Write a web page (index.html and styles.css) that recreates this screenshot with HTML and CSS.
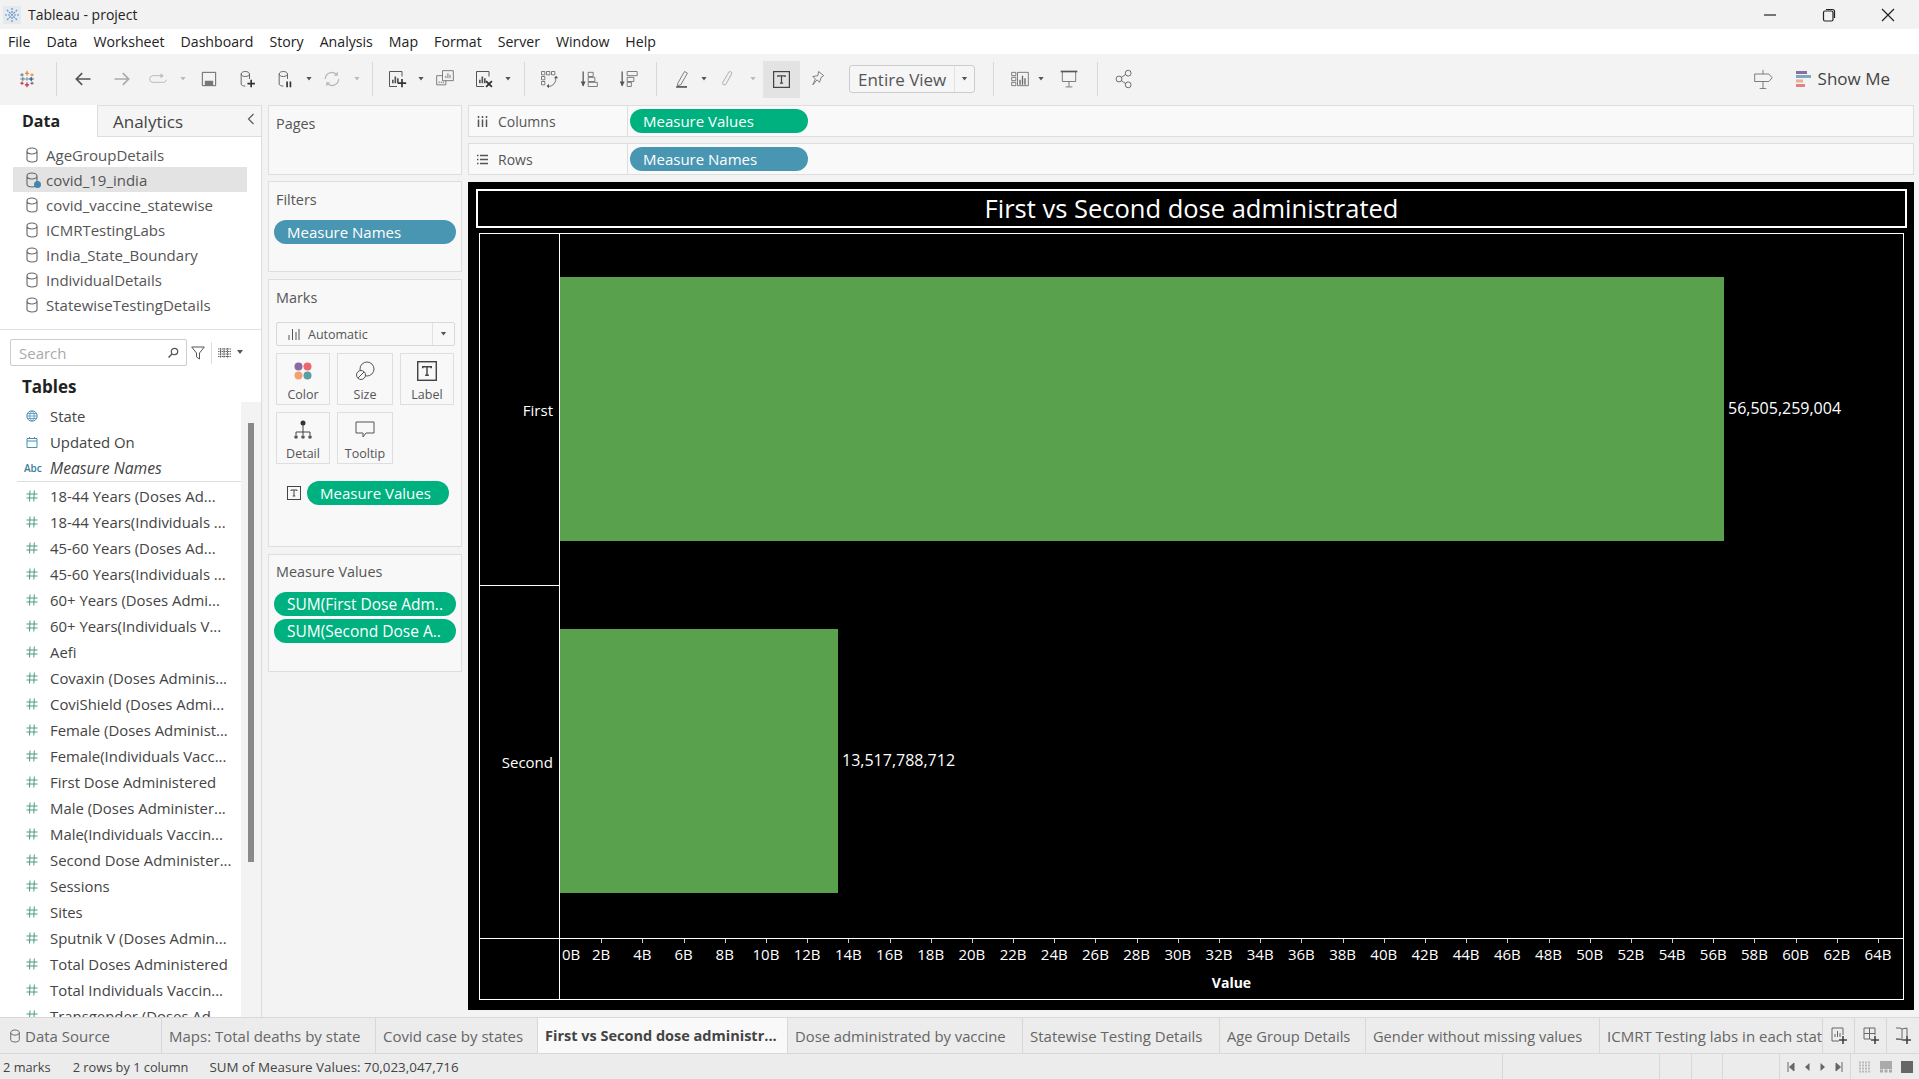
FILE: index.html
```html
<!DOCTYPE html>
<html lang="en">
<head>
<meta charset="utf-8">
<title>Tableau - project</title>
<link rel="stylesheet" href="styles.css">
</head>
<body>
<svg class="defs" width="0" height="0" aria-hidden="true">
  <symbol id="cyl" viewBox="0 0 14 16"><path d="M2 4c0-1.7 2.2-3 5-3s5 1.3 5 3v8.5c0 1.4-2.2 2.5-5 2.5s-5-1.100-5-2.500zM2 4c0 1.700 2.200 3 5 3s5-1.300 5-3" fill="none" stroke="#666" stroke-width="1.100"/></symbol>
  <symbol id="hash" viewBox="0 0 12 12"><path d="M4 .5 3.500 11.500M8.300 .5 7.800 11.500M.5 4H11.500M.5 8H11.500" fill="none" stroke="#4a9a85" stroke-width="1"/></symbol>
  <symbol id="t" viewBox="0 0 14 14"><rect x=".5" y=".5" width="13" height="13" fill="none" stroke="#444"/><path d="M4 5V4h6v1M7 4v6M5.700 10h2.600" fill="none" stroke="#444"/></symbol>
  <symbol id="sheet" viewBox="0 0 24 24"><path d="M18 9V3H3v18h9" fill="none" stroke="#555" stroke-width="1.200"/><path d="M7 17v-4M10 17V9M13 17v-6" stroke="#555" stroke-width="2" fill="none"/></symbol>
</svg>

<header class="titlebar">
  <svg class="applogo" viewBox="0 0 18 18"><rect width="18" height="18" fill="#e4e9ef"/><path d="M9 2v14M2 9h14M4 4l10 10M14 4 4 14" stroke="#5f93bd" stroke-width="1.200" stroke-dasharray="2 1"/></svg>
  <span class="apptitle">Tableau - project</span>
  <div class="winbtns">
    <svg class="win" viewBox="0 0 14 14"><path d="M1 7H13" stroke="#222" stroke-width="1.200"/></svg>
    <svg class="win" viewBox="0 0 14 14"><rect x="1.500" y="3" width="9.500" height="10" rx="1.500" fill="none" stroke="#222" stroke-width="1.200"/><path d="M4 1.500h6.500c1 0 2 1 2 2V10" fill="none" stroke="#222" stroke-width="1.200"/></svg>
    <svg class="win" viewBox="0 0 14 14"><path d="M1 1 13 13M13 1 1 13" stroke="#222" stroke-width="1.200"/></svg>
  </div>
</header>

<nav class="menubar">
  <span>File</span><span>Data</span><span>Worksheet</span><span>Dashboard</span><span>Story</span><span>Analysis</span><span>Map</span><span>Format</span><span>Server</span><span>Window</span><span>Help</span>
</nav>

<div class="toolbar">
  <svg class="tb m15" viewBox="0 0 24 24"><g stroke-width="1.300"><path d="M12 2v6M9.500 5h5" stroke="#e8762d"/><path d="M12 16v6M9.500 19h5" stroke="#c72037"/><path d="M4 12h6M7 9.500v5" stroke="#5b879b"/><path d="M14 12h6M17 9.500v5" stroke="#1f447a"/><path d="M12 10v4M10 12h4" stroke="#7099a6"/><path d="M6 5v4M4 7h4" stroke="#59879b"/><path d="M18 5v4M16 7h4" stroke="#eb912b"/><path d="M6 15v4M4 17h4" stroke="#c72037"/><path d="M18 15v4M16 17h4" stroke="#5c6692"/></g></svg>
  <i class="sep m17"></i>
  <svg class="tb m14" viewBox="0 0 24 24"><path d="M21 12H4M11 5l-7 7 7 7" fill="none" stroke="#555" stroke-width="2"/></svg>
  <svg class="tb m15" viewBox="0 0 24 24"><path d="M3 12h17M13 5l7 7-7 7" fill="none" stroke="#aaa" stroke-width="2"/></svg>
  <svg class="tb m12" viewBox="0 0 24 24"><path d="M17 8H6a3.500 3.500 0 0 0 0 8h13a3.500 3.500 0 0 0 3-3" fill="none" stroke="#bbb" stroke-width="1.200"/><path d="M15 5l4 3-4 3z" fill="#bbb"/></svg>
  <i class="dd off m9"></i>
  <svg class="tb m10" viewBox="0 0 24 24"><path d="M4 4h16v16H4z" fill="none" stroke="#666" stroke-width="1.200"/><path d="M7 20v-6h10v6zM9 16h3v4H9z" fill="#777"/></svg>
  <svg class="tb m14" viewBox="0 0 24 24"><path d="M5 6c0-1.700 2.200-3 5-3s5 1.300 5 3v6M5 6v12c0 1.400 2 2.500 5 2.500M5 6c0 1.700 2.200 3 5 3s5-1.300 5-3" fill="none" stroke="#666" stroke-width="1.200"/><path d="M17 13v9M12.500 17.500h9" stroke="#333" stroke-width="2"/></svg>
  <svg class="tb m14" viewBox="0 0 24 24"><path d="M5 6c0-1.700 2.200-3 5-3s5 1.300 5 3v6M5 6v12c0 1.400 2 2.500 5 2.500M5 6c0 1.700 2.200 3 5 3s5-1.300 5-3" fill="none" stroke="#666" stroke-width="1.200"/><path d="M14.500 15v7M18.500 15v7" stroke="#333" stroke-width="2"/></svg>
  <i class="dd m8"></i>
  <svg class="tb m7" viewBox="0 0 24 24"><path d="M4 12a8 8 0 0 1 14-5M20 12a8 8 0 0 1-14 5" fill="none" stroke="#bbb" stroke-width="1.600"/><path d="M19 3v5h-5zM5 21v-5h5z" fill="#bbb"/></svg>
  <i class="dd off m9"></i>
  <i class="sep m11"></i>
  <svg class="tb m12" viewBox="0 0 24 24"><use href="#sheet"/><path d="M18 12v10M13 17h10" stroke="#333" stroke-width="2"/></svg>
  <i class="dd m8"></i>
  <svg class="tb m8" viewBox="0 0 24 24"><path d="M11 8H2v11h11v-6" fill="none" stroke="#666"/><path d="M9 2h13v12H9z" fill="#f3f3f3" stroke="#666"/><path d="M13 11V8M15.500 11V5M18 11V7M5 17v-2M7.500 17v-2M10 17v-2" stroke="#666"/></svg>
  <svg class="tb m15" viewBox="0 0 24 24"><use href="#sheet"/><path d="M14.500 14.500l7 7M21.500 14.500l-7 7" stroke="#333" stroke-width="2.200"/></svg>
  <i class="dd m8"></i>
  <i class="sep m12"></i>
  <svg class="tb m12" viewBox="0 0 24 24"><path d="M3 3h4v4H3zM9 3h4v4H9zM15 3h4v4h-4zM3 9h4v4H3zM3 15h4v4H3z" fill="none" stroke="#666"/><path d="M20 10a9 9 0 0 1-9 11" fill="none" stroke="#555"/><path d="M18 11h5l-2.500-3zM12 18v5l-3-2.500z" fill="#555"/></svg>
  <svg class="tb m16" viewBox="0 0 24 24"><path d="M5 3v17" stroke="#555" stroke-width="1.500"/><path d="M2 15l3 6 3-6z" fill="#555"/><path d="M11 4h6v5h-6zM11 10h8v5h-8zM11 16h11v5H11z" fill="none" stroke="#666"/></svg>
  <svg class="tb m15" viewBox="0 0 24 24"><path d="M5 3v17" stroke="#555" stroke-width="1.500"/><path d="M2 15l3 6 3-6z" fill="#555"/><path d="M11 3h12v5H11zM11 10h8v5h-8zM11 16h5v5h-5z" fill="none" stroke="#666"/></svg>
  <i class="sep m16"></i>
  <svg class="tb m13" viewBox="0 0 24 24"><path d="M7 17 15 3l3.500 2-8 14-4 1z" fill="none" stroke="#666"/><path d="M5 21.500h13" stroke="#555" stroke-width="2"/></svg>
  <i class="dd m6"></i>
  <svg class="tb m8" viewBox="0 0 24 24"><path d="M16 7 9.500 18c-1.300 2.200-5 .5-3.700-2L13 4c1-1.700 4-1 3.500 1.500L10 17" fill="none" stroke="#bbb" stroke-width="1.300"/></svg>
  <i class="dd off m9"></i>
  <div class="tbtn m6"><svg class="t16" viewBox="0 0 14 14"><use href="#t"/></svg></div>
  <svg class="tb m5" viewBox="0 0 24 24"><path d="M14 3l6 5-3 2-2 6-3-3-5 6 3-7-3-3 6-1z" fill="none" stroke="#666"/></svg>
  <div class="fit m20"><span class="fit-label">Entire View</span><span class="fit-arrow"><i class="dd"></i></span></div>
  <i class="sep m18"></i>
  <svg class="tb m14" viewBox="0 0 24 24"><path d="M2 4h5v4H2zM2 10h5v4H2zM2 16h5v4H2zM9 4h13v16H9z" fill="none" stroke="#666"/><path d="M12 19v-6M15 19V8M18 19v-8" stroke="#666" stroke-width="1.600"/></svg>
  <i class="dd m5"></i>
  <svg class="tb m12" viewBox="0 0 24 24"><path d="M2 3h20" stroke="#555" stroke-width="2"/><path d="M4 3v12h16V3M12 15v6M8 21.500h8" fill="none" stroke="#666"/></svg>
  <i class="sep m16"></i>
  <svg class="tb m14" viewBox="0 0 24 24"><circle cx="17" cy="5" r="3.500" fill="none" stroke="#555"/><circle cx="6" cy="12" r="3.500" fill="none" stroke="#555"/><circle cx="17" cy="19" r="3.500" fill="none" stroke="#555"/><path d="M9 10l5-3.500M9 14l5 3.500" stroke="#555"/></svg>
  <div class="tb-right">
    <svg class="tb" viewBox="0 0 24 24"><path d="M2 6h17l4 4.500-4 4.500H2zM12 1v5M12 15v9M8 23.500h8" fill="none" stroke="#666"/></svg>
    <div class="showme">
      <svg class="showme-ico" viewBox="0 0 15 16"><rect width="11" height="3" fill="#8a6f9e"/><rect y="4" width="15" height="3" fill="#7fa8c2"/><rect y="8.500" width="7" height="3" fill="#eeb08c"/><rect y="13" width="9" height="3" fill="#e2808a"/></svg>
      <span>Show Me</span>
    </div>
  </div>
</div>

<main class="main">
  <aside class="data">
    <div class="paneltabs">
      <div class="ptab active">Data</div>
      <div class="ptab"><span>Analytics</span><svg class="chev" viewBox="0 0 8 12"><path d="M6.500 1 1.500 6l5 5" fill="none" stroke="#555" stroke-width="1.100"/></svg></div>
    </div>
    <ul class="sources">
      <li><svg class="cy"><use href="#cyl"/></svg>AgeGroupDetails</li>
      <li class="sel"><span class="cywrap"><svg class="cy"><use href="#cyl"/></svg><i class="tick"></i></span>covid_19_india</li>
      <li><svg class="cy"><use href="#cyl"/></svg>covid_vaccine_statewise</li>
      <li><svg class="cy"><use href="#cyl"/></svg>ICMRTestingLabs</li>
      <li><svg class="cy"><use href="#cyl"/></svg>India_State_Boundary</li>
      <li><svg class="cy"><use href="#cyl"/></svg>IndividualDetails</li>
      <li><svg class="cy"><use href="#cyl"/></svg>StatewiseTestingDetails</li>
    </ul>
    <div class="searchrow">
      <div class="search"><span>Search</span><svg viewBox="0 0 12 12" class="glass"><circle cx="7.500" cy="4.500" r="3.200" fill="none" stroke="#555" stroke-width="1.200"/><path d="M5 7 1.500 10.500" stroke="#555" stroke-width="1.400"/></svg></div>
      <svg class="funnel" viewBox="0 0 14 14"><path d="M.7 1h12.600L8.500 7v6l-3-2V7z" fill="none" stroke="#555"/></svg>
      <i class="vsep"></i>
      <svg class="listico" viewBox="0 0 13 10"><path d="M0 1h13M0 3.500h13M0 6h13M0 8.500h13M2.500 0v10M6 0v10M9.500 0v10" stroke="#666" stroke-dasharray="1.500 .5"/></svg>
      <i class="dd"></i>
    </div>
    <h2 class="tables">Tables</h2>
    <div class="fieldwrap">
      <div class="fields">
        <div class="field"><svg class="fi" viewBox="0 0 12 12"><circle cx="6" cy="6" r="5.200" fill="none" stroke="#4a8fb0"/><path d="M1 6h10M6 1c-3 3-3 7 0 10M6 1c3 3 3 7 0 10M2 3.500h8M2 8.500h8" fill="none" stroke="#4a8fb0" stroke-width=".8"/></svg>State</div>
        <div class="field"><svg class="fi" viewBox="0 0 12 12"><path d="M1 2.500h10v9H1zM1 5h10M3.500 1v2M8.500 1v2" fill="none" stroke="#4a8fb0"/></svg>Updated On</div>
        <div class="field ital"><span class="abc">Abc</span>Measure Names</div>
        <div class="rule"></div>
        <div class="field"><svg class="fi"><use href="#hash"/></svg>18-44 Years (Doses Ad...</div>
        <div class="field"><svg class="fi"><use href="#hash"/></svg>18-44 Years(Individuals ...</div>
        <div class="field"><svg class="fi"><use href="#hash"/></svg>45-60 Years (Doses Ad...</div>
        <div class="field"><svg class="fi"><use href="#hash"/></svg>45-60 Years(Individuals ...</div>
        <div class="field"><svg class="fi"><use href="#hash"/></svg>60+ Years (Doses Admi...</div>
        <div class="field"><svg class="fi"><use href="#hash"/></svg>60+ Years(Individuals V...</div>
        <div class="field"><svg class="fi"><use href="#hash"/></svg>Aefi</div>
        <div class="field"><svg class="fi"><use href="#hash"/></svg>Covaxin (Doses Adminis...</div>
        <div class="field"><svg class="fi"><use href="#hash"/></svg>CoviShield (Doses Admi...</div>
        <div class="field"><svg class="fi"><use href="#hash"/></svg>Female (Doses Administ...</div>
        <div class="field"><svg class="fi"><use href="#hash"/></svg>Female(Individuals Vacc...</div>
        <div class="field"><svg class="fi"><use href="#hash"/></svg>First Dose Administered</div>
        <div class="field"><svg class="fi"><use href="#hash"/></svg>Male (Doses Administer...</div>
        <div class="field"><svg class="fi"><use href="#hash"/></svg>Male(Individuals Vaccin...</div>
        <div class="field"><svg class="fi"><use href="#hash"/></svg>Second Dose Administer...</div>
        <div class="field"><svg class="fi"><use href="#hash"/></svg>Sessions</div>
        <div class="field"><svg class="fi"><use href="#hash"/></svg>Sites</div>
        <div class="field"><svg class="fi"><use href="#hash"/></svg>Sputnik V (Doses Admin...</div>
        <div class="field"><svg class="fi"><use href="#hash"/></svg>Total Doses Administered</div>
        <div class="field"><svg class="fi"><use href="#hash"/></svg>Total Individuals Vaccin...</div>
        <div class="field"><svg class="fi"><use href="#hash"/></svg>Transgender (Doses Ad...</div>
      </div>
      <div class="track"><div class="thumb"></div></div>
    </div>
  </aside>

  <section class="cards">
    <div class="card c-pages"><div class="cardtitle">Pages</div></div>
    <div class="card c-filters"><div class="cardtitle">Filters</div><div class="pill blue wide">Measure Names</div></div>
    <div class="card c-marks">
      <div class="cardtitle">Marks</div>
      <div class="marksel">
        <span class="marksel-l"><svg class="bars" viewBox="0 0 12 12"><path d="M1 12V7M4.500 12V1M8 12V4M11 12V1" stroke="#555" fill="none"/></svg>Automatic</span>
        <span class="marksel-r"><i class="dd"></i></span>
      </div>
      <div class="markgrid">
        <div class="mbtn"><svg class="mi" viewBox="0 0 20 20"><circle cx="5.500" cy="5.500" r="4" fill="#8a6aa0"/><circle cx="14.500" cy="5.500" r="4" fill="#ee6570"/><circle cx="5.500" cy="14.500" r="4" fill="#f2a072"/><circle cx="14.500" cy="14.500" r="4" fill="#56a0a0"/></svg>Color</div>
        <div class="mbtn"><svg class="mi" viewBox="0 0 20 20"><circle cx="12" cy="8" r="7" fill="none" stroke="#555"/><circle cx="6" cy="14" r="4.500" fill="#f8f8f8" stroke="#555"/><path d="M3 17 9 11" stroke="#555"/></svg>Size</div>
        <div class="mbtn"><svg class="mi" viewBox="0 0 14 14"><use href="#t"/></svg>Label</div>
        <div class="mbtn"><svg class="mi" viewBox="0 0 20 20"><circle cx="10" cy="3" r="2.500" fill="#333"/><path d="M10 5v6M3 15v-3h14v3M10 11v4" fill="none" stroke="#444"/><circle cx="3" cy="17" r="1.800" fill="#555"/><circle cx="10" cy="17" r="1.800" fill="#555"/><circle cx="17" cy="17" r="1.800" fill="#555"/></svg>Detail</div>
        <div class="mbtn"><svg class="mi" viewBox="0 0 20 20"><path d="M1 2h18v11h-8l-3 4v-4H1z" fill="none" stroke="#555"/></svg>Tooltip</div>
      </div>
      <div class="markpill"><svg class="t14" viewBox="0 0 14 14"><use href="#t"/></svg><div class="pill green">Measure Values</div></div>
    </div>
    <div class="card c-mv">
      <div class="cardtitle">Measure Values</div>
      <div class="pill green wide">SUM(First Dose Adm..</div>
      <div class="pill green wide">SUM(Second Dose A..</div>
    </div>
  </section>

  <section class="work">
    <div class="shelf">
      <div class="shelf-l"><svg class="si" viewBox="0 0 11 11"><path d="M1.500 0v2M5.500 0v2M9.500 0v2M1.500 3.500V11M5.500 3.500V11M9.500 3.500V11" stroke="#555" stroke-width="1.500"/></svg>Columns</div>
      <div class="pill green shelfpill">Measure Values</div>
    </div>
    <div class="shelf">
      <div class="shelf-l"><svg class="si" viewBox="0 0 11 11"><path d="M0 1.500h1.500M3 1.500h8M0 5.500h1.500M3 5.500h8M0 9.500h1.500M3 9.500h8" stroke="#555" stroke-width="1.300"/></svg>Rows</div>
      <div class="pill blue shelfpill">Measure Names</div>
    </div>
    <div class="viz">
      <h1 class="viztitle">First vs Second dose administrated</h1>
      <div class="frame">
        <div class="vrow">
          <div class="vhdr ruled">First</div>
          <div class="vplot"><div class="bar" style="width:1164px"></div><span class="val">56,505,259,004</span></div>
        </div>
        <div class="vrow">
          <div class="vhdr">Second</div>
          <div class="vplot"><div class="bar" style="width:278px"></div><span class="val">13,517,788,712</span></div>
        </div>
        <div class="axisrow">
          <div class="axishdr"></div>
          <div class="axis">
            <div class="ticks">
              <span class="t0">0B</span><span>2B</span><span>4B</span><span>6B</span><span>8B</span><span>10B</span><span>12B</span><span>14B</span><span>16B</span><span>18B</span><span>20B</span><span>22B</span><span>24B</span><span>26B</span><span>28B</span><span>30B</span><span>32B</span><span>34B</span><span>36B</span><span>38B</span><span>40B</span><span>42B</span><span>44B</span><span>46B</span><span>48B</span><span>50B</span><span>52B</span><span>54B</span><span>56B</span><span>58B</span><span>60B</span><span>62B</span><span>64B</span>
            </div>
            <div class="axistitle">Value</div>
          </div>
        </div>
      </div>
    </div>
  </section>
</main>

<div class="tabs">
  <div class="tab t1"><svg class="dsi"><use href="#cyl"/></svg>Data Source</div>
  <div class="tab t2">Maps: Total deaths by state</div>
  <div class="tab t3">Covid case by states</div>
  <div class="tab t4 on">First vs Second dose administr...</div>
  <div class="tab t5">Dose administrated by vaccine</div>
  <div class="tab t6">Statewise Testing Details</div>
  <div class="tab t7">Age Group Details</div>
  <div class="tab t8">Gender without missing values</div>
  <div class="tab t9">ICMRT Testing labs in each stat</div>
  <div class="tabadd"><svg viewBox="0 0 18 18" class="ta"><path d="M9 14H2V1h11v7" fill="none" stroke="#666"/><path d="M5 10V7M7.500 10V4M10 10V6" stroke="#666"/><path d="M13 9v8M9 13h8" stroke="#444" stroke-width="1.600"/></svg></div>
  <div class="tabadd"><svg viewBox="0 0 18 18" class="ta"><path d="M9 12H2V1h11v7M2 6.500h11M7.500 1v11" fill="none" stroke="#666"/><path d="M13 9v8M9 13h8" stroke="#444" stroke-width="1.600"/></svg></div>
  <div class="tabadd"><svg viewBox="0 0 18 18" class="ta"><path d="M2 1h4l2 1 5-1v8M8 2v10M9 13l-3-1H2z" fill="none" stroke="#666"/><path d="M13 9v8M9 13h8" stroke="#444" stroke-width="1.600"/></svg></div>
</div>

<footer class="status">
  <span class="st s1">2 marks</span>
  <span class="st s2">2 rows by 1 column</span>
  <span class="st s3">SUM of Measure Values: 70,023,047,716</span>
  <div class="st-right">
    <i class="cell c1"></i><i class="cell c2"></i><i class="cell c3"></i><i class="cell c4"></i>
    <div class="cell nav">
      <svg class="nv" viewBox="0 0 8 10"><path d="M1 0v10M7 1 2.500 5 7 9z" stroke="#666" fill="#666"/></svg>
      <svg class="nv" viewBox="0 0 8 10"><path d="M6.500 1 2 5l4.500 4z" fill="#666"/></svg>
      <svg class="nv" viewBox="0 0 8 10"><path d="M1.500 1 6 5 1.500 9z" fill="#666"/></svg>
      <svg class="nv" viewBox="0 0 8 10"><path d="M7 0v10M1 1l4.500 4L1 9z" stroke="#666" fill="#666"/></svg>
    </div>
    <div class="cell views">
      <svg class="vw" viewBox="0 0 12 12"><path d="M0 1.500h12M0 4.500h12M0 7.500h12M0 10.500h12" stroke="#bbb" stroke-width="2" stroke-dasharray="2 1"/></svg>
      <svg class="vw" viewBox="0 0 12 12"><path d="M0 0h12v8H0z" fill="#aaa"/><path d="M0 10h3M4.500 10h3M9 10h3" stroke="#aaa" stroke-width="3"/></svg>
      <svg class="vw" viewBox="0 0 12 12"><path d="M0 0h12v12H0z" fill="#666"/></svg>
    </div>
  </div>
</footer>
</body>
</html>
```

FILE: styles.css
```css
* { box-sizing: border-box; }
html, body { margin: 0; padding: 0; height: 100%; }
body {
  width: 1919px; height: 1079px; overflow: hidden;
  font-family: "Open Sans", "Noto Sans", sans-serif;
  font-size: 14px; color: #444; background: #f3f3f3;
  display: flex; flex-direction: column;
}
.defs { position: absolute; }
ul { list-style: none; margin: 0; padding: 0; }
h1, h2 { margin: 0; font-weight: inherit; }
i { display: block; font-style: normal; }

.titlebar { height: 29px; background: #f2f2f2; display: flex; align-items: center; color: #222; font-size: 14px; }
.applogo { width: 18px; height: 18px; margin-left: 3px; flex: none; }
.apptitle { margin-left: 7px; }
.winbtns { margin-left: auto; display: flex; padding-right: 24px; gap: 45px; }
.win { width: 14px; height: 14px; display: block; }

.menubar { height: 25px; background: #fff; display: flex; align-items: center; gap: 16px; padding-left: 8px; color: #222; font-size: 14.150px; }

.toolbar { height: 51px; background: #f3f3f3; display: flex; align-items: center; flex: none; padding-bottom: 1px; }
.tb { width: 24px; height: 24px; flex: none; display: block; padding: 2px; }
.sep { width: 1px; height: 34px; background: #d8d8d8; flex: none; }
.dd { width: 8px; height: 5px; background: #555; clip-path: polygon(1px 0, 7px 0, 4px 4px); flex: none; }
.dd.off { background: #bbb; }
.m5 { margin-left: 5px; } .m6 { margin-left: 6px; } .m7 { margin-left: 7px; } .m8 { margin-left: 8px; }
.m9 { margin-left: 9px; } .m10 { margin-left: 10px; } .m11 { margin-left: 11px; } .m12 { margin-left: 12px; }
.m13 { margin-left: 13px; } .m14 { margin-left: 14px; } .m15 { margin-left: 15px; } .m16 { margin-left: 16px; }
.m17 { margin-left: 17px; } .m18 { margin-left: 18px; } .m20 { margin-left: 20px; }
.tbtn { width: 37px; height: 37px; background: #e3e3e3; display: flex; align-items: center; justify-content: center; flex: none; }
.t16 { width: 17px; height: 17px; }
.fit { width: 126px; height: 28px; border: 1px solid #ccc; border-radius: 3px; background: #f6f6f6; display: flex; align-items: stretch; flex: none; color: #555; font-size: 17px; }
.fit-label { width: 104px; display: flex; align-items: center; padding-left: 8px; white-space: nowrap; }
.fit-arrow { flex: 1; border-left: 1px solid #e2e2e2; display: flex; align-items: center; justify-content: center; }
.tb-right { margin-left: auto; display: flex; align-items: center; padding-right: 29px; }
.showme { display: flex; align-items: center; margin-left: 21px; font-size: 17px; color: #444; }
.showme span { margin-bottom: 2px; }
.showme-ico { width: 15px; height: 16px; margin-right: 7px; }

.main { height: 912px; display: flex; flex: none; }

.data { width: 262px; background: #fff; border-right: 1px solid #dcdcdc; flex: none; display: flex; flex-direction: column; }
.paneltabs { height: 32px; display: flex; flex: none; }
.ptab { display: flex; align-items: center; font-size: 17px; color: #444; background: #f5f5f5; border-top: 1px solid #e0e0e0; border-bottom: 1px solid #ddd; border-left: 1px solid #ddd; flex: 1; padding-left: 15px; justify-content: space-between; padding-right: 6px; }
.ptab.active { width: 97px; flex: none; background: #fff; border: 0; font-weight: 700; color: #222; padding-left: 22px; font-size: 16px; }
.chev { width: 8px; height: 12px; margin-top: -4px; }
.sources { padding-top: 5px; height: 193px; border-bottom: 1px solid #e0e0e0; flex: none; color: #555; font-size: 15px; }
.sources li { height: 25px; display: flex; align-items: center; margin: 0 14px 0 13px; padding-left: 12px; }
.sources li.sel { background: #e3e3e3; }
.cy { width: 14px; height: 16px; margin-right: 7px; flex: none; }
.cywrap { position: relative; display: flex; flex: none; }
.tick { position: absolute; right: 5px; bottom: 0; width: 7px; height: 7px; border-radius: 50%; background: #3f88ad; }
.searchrow { display: flex; align-items: center; height: 27px; margin: 9px 0 0 10px; flex: none; }
.search { width: 177px; height: 27px; border: 1px solid #ccc; border-radius: 2px; display: flex; align-items: center; justify-content: space-between; padding: 0 7px 0 8px; color: #aaa; font-size: 15px; }
.glass { width: 12px; height: 12px; }
.funnel { width: 14px; height: 14px; margin-left: 4px; }
.vsep { width: 1px; height: 22px; background: #ddd; margin-left: 6px; }
.listico { width: 13px; height: 10px; margin-left: 6px; }
.search + .funnel ~ .dd { margin-left: 5px; }
.tables { height: 36px; line-height: 42px; padding-left: 22px; font-size: 17px; font-weight: 700; color: #222; flex: none; }
.fieldwrap { flex: 1; display: flex; min-height: 0; }
.fields { width: 241px; overflow: hidden; flex: none; color: #444; font-size: 14.900px; padding-top: 1px; }
.field { height: 26px; display: flex; align-items: center; padding-left: 26px; white-space: nowrap; }
.field.ital { font-style: italic; font-size: 15.700px; }
.fi { width: 12px; height: 12px; margin-right: 12px; flex: none; }
.abc { width: 17px; margin: 0 9px 0 -2px; font-size: 10px; font-style: normal; color: #3b7d9c; font-weight: 600; flex: none; }
.rule { height: 1px; background: #ddd; margin: 0 0 1px 17px; }
.track { flex: 1; background: #f3f3f3; padding: 21px 7px 0 7px; }
.thumb { height: 439px; background: #8a8a8a; }

.cards { width: 206px; padding: 0 6px; flex: none; display: flex; flex-direction: column; gap: 6px; }
.card { background: #f8f8f8; border: 1px solid #dedede; padding: 0 5px; flex: none; }
.cardtitle { color: #555; padding-left: 2px; height: 36px; line-height: 36px; font-size: 14.400px; white-space: nowrap; }
.c-pages { height: 70px; margin-top: 0; }
.c-filters { height: 91px; }
.c-marks { height: 268px; margin-top: 1px; }
.c-mv { height: 118px; margin-top: 1px; }
.pill { height: 24px; line-height: 24px; border-radius: 12px; color: #fff; font-size: 15px; white-space: nowrap; padding-left: 13px; }
.pill.blue { background: #4996b2; }
.pill.green { background: #00b180; }
.wide { width: 182px; }
.c-filters .cardtitle { height: 38px; }
.c-mv .cardtitle { height: 37px; line-height: 34px; }
.c-mv .pill { font-size: 15.500px; }
.c-mv .pill + .pill { margin-top: 3px; }
.marksel { height: 24px; border: 1px solid #d8d8d8; border-radius: 2px; margin: 6px 1px 0 2px; display: flex; background: #f8f8f8; font-size: 12.500px; color: #555; }
.marksel-l { flex: 1; display: flex; align-items: center; padding-left: 11px; }
.bars { width: 12px; height: 12px; margin-right: 8px; }
.marksel-r { width: 22px; border-left: 1px solid #e2e2e2; display: flex; align-items: center; justify-content: center; }
.markgrid { display: grid; grid-template-columns: 54px 56px 54px; grid-auto-rows: 52px; column-gap: 7px; row-gap: 7px; margin: 7px 0 0 2px; }
.mbtn { border: 1px solid #dedede; background: #f8f8f8; display: flex; flex-direction: column; align-items: center; font-size: 12.500px; color: #555; padding-top: 7px; }
.mi { width: 20px; height: 20px; margin-bottom: 5px; flex: none; }
.markpill { display: flex; align-items: center; margin: 17px 0 0 13px; }
.t14 { width: 14px; height: 14px; flex: none; }
.markpill .pill { width: 142px; margin-left: 6px; }

.work { flex: 1; min-width: 0; padding-right: 5px; display: flex; flex-direction: column; }
.shelf { height: 32px; border: 1px solid #dedede; background: #f9f9f9; display: flex; align-items: center; flex: none; margin-top: 0; }
.shelf + .shelf { margin-top: 6px; }
.shelf-l { width: 159px; height: 100%; border-right: 1px solid #dedede; display: flex; align-items: center; color: #555; padding-left: 8px; }
.si { width: 11px; height: 11px; margin-right: 10px; flex: none; }
.shelfpill { width: 178px; margin-left: 2px; }
.viz { flex: 1; min-height: 0; margin-top: 7px; margin-bottom: 7px; background: #000; padding: 7px 7px 10px 8px; display: flex; flex-direction: column; color: #fff; }
.viztitle { height: 39px; border: 2px solid #fff; text-align: center; line-height: 34px; font-size: 25.500px; flex: none; }
.frame { flex: 1; margin: 5px 3px 0 3px; border: 1px solid #fff; display: flex; flex-direction: column; min-height: 0; }
.vrow { height: 352px; flex: none; display: flex; }
.vhdr { width: 80px; border-right: 1px solid #fff; flex: none; display: flex; align-items: center; justify-content: flex-end; padding-right: 6px; font-size: 15px; }
.vhdr.ruled { border-bottom: 1px solid #fff; }
.vplot { flex: 1; display: flex; align-items: center; padding-bottom: 2px; }
.bar { height: 264px; background: #5aa14e; flex: none; }
.val { margin-left: 4px; font-size: 16px; margin-bottom: 2px; }
.axisrow { flex: 1; border-top: 1px solid #fff; display: flex; min-height: 0; }
.axishdr { width: 80px; border-right: 1px solid #fff; flex: none; }
.axis { flex: 1; min-width: 0; }
.ticks { display: flex; height: 31px; font-size: 15px; }
.ticks span { width: 41.200px; flex: none; text-align: center; position: relative; padding-top: 5px; white-space: nowrap; }
.ticks span::before { content: ""; position: absolute; left: 50%; top: 0; width: 1px; height: 4px; background: #ccc; }
.ticks .t0 { width: 20.600px; text-align: left; padding-left: 2px; }
.ticks .t0::before { display: none; }
.axistitle { text-align: center; font-weight: 700; font-size: 14px; line-height: 24px; margin-top: 1px; }

.tabs { height: 37px; display: flex; border-top: 1px solid #d8d8d8; border-bottom: 1px solid #d8d8d8; background: #ececec; flex: none; color: #666; }
.tab { display: flex; align-items: center; white-space: nowrap; border-right: 1px solid #d8d8d8; overflow: hidden; flex: none; font-size: 15px; padding-left: 7px; }
.t1 { width: 162px; padding-left: 9px; } .t2 { width: 214px; } .t3 { width: 162px; } .t4 { width: 250px; font-size: 14.500px; } .t5 { width: 235px; font-size: 14.800px; }
.t6 { width: 197px; } .t7 { width: 146px; font-size: 14.700px; } .t8 { width: 234px; font-size: 14.600px; } .t9 { width: 223px; }
.on { background: #f9f9f9; font-weight: 700; color: #444; }
.dsi { width: 12px; height: 14px; margin-right: 4px; flex: none; }
.tabadd { width: 32px; border-right: 1px solid #d8d8d8; display: flex; align-items: center; justify-content: center; flex: none; }
.tabadd:last-child { border-right: 0; }
.ta { width: 18px; height: 18px; }

.status { flex: 1; background: #ececec; display: flex; align-items: center; font-size: 12.800px; color: #444; }
.st { white-space: nowrap; }
.s1 { margin-left: 3px; } .s2 { margin-left: 22px; } .s3 { margin-left: 21px; font-size: 13.400px; }
.st-right { margin-left: auto; display: flex; height: 100%; }
.cell { border-left: 1px solid #d8d8d8; height: 100%; flex: none; }
.c1 { width: 157px; } .c2 { width: 32px; } .c3 { width: 31px; } .c4 { width: 57px; }
.nav { width: 71px; display: flex; align-items: center; padding-left: 7px; gap: 8px; }
.nv { width: 8px; height: 10px; }
.views { width: 69px; display: flex; align-items: center; padding-left: 8px; gap: 9px; }
.vw { width: 12px; height: 12px; }
```
